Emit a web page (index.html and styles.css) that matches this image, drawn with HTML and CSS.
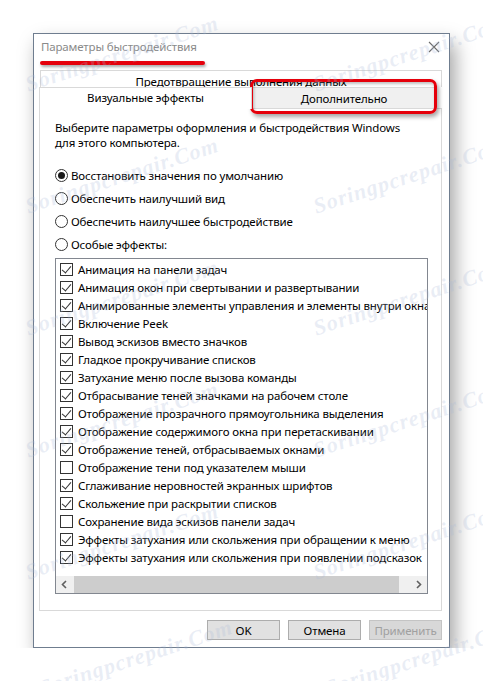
FILE: index.html
```html
<!DOCTYPE html>
<html lang="ru">
<head>
    <meta charset="UTF-8">
    <meta name="viewport" content="width=device-width, initial-scale=1.0">
    <title>Параметры быстродействия</title>
    <link rel="stylesheet" href="styles.css">
</head>
<body>

    <div class="window">
        <div class="titlebar">
            <span class="title">Параметры быстродействия</span>
            <svg class="close" width="12" height="12" viewBox="0 0 12 12">
                <path d="M1 1 L11 11 M11 1 L1 11" stroke="#6b6b6b" stroke-width="1.1" fill="none"/>
            </svg>
        </div>

        <div class="content">
            <div class="tabs">
                <div class="tab-row back">
                    <div class="tab wide">Предотвращение выполнения данных</div>
                </div>
                <div class="tab-row front">
                    <div class="tab active">Визуальные эффекты</div>
                    <div class="tab other">Дополнительно</div>
                </div>
            </div>

            <div class="panel">
                <p class="intro">Выберите параметры оформления и быстродействия Windows<br>для этого компьютера.</p>

                <div class="radios">
                    <label class="radio"><span class="dot on"></span>Восстановить значения по умолчанию</label>
                    <label class="radio"><span class="dot"></span>Обеспечить наилучший вид</label>
                    <label class="radio"><span class="dot"></span>Обеспечить наилучшее быстродействие</label>
                    <label class="radio"><span class="dot"></span>Особые эффекты:</label>
                </div>

                <div class="listbox">
                    <ul class="items">
                        <li><span class="box on"></span>Анимация на панели задач</li>
                        <li><span class="box on"></span>Анимация окон при свертывании и развертывании</li>
                        <li><span class="box on"></span>Анимированные элементы управления и элементы внутри окна</li>
                        <li><span class="box on"></span>Включение Peek</li>
                        <li><span class="box on"></span>Вывод эскизов вместо значков</li>
                        <li><span class="box on"></span>Гладкое прокручивание списков</li>
                        <li><span class="box on"></span>Затухание меню после вызова команды</li>
                        <li><span class="box on"></span>Отбрасывание теней значками на рабочем столе</li>
                        <li><span class="box on"></span>Отображение прозрачного прямоугольника выделения</li>
                        <li><span class="box on"></span>Отображение содержимого окна при перетаскивании</li>
                        <li><span class="box on"></span>Отображение теней, отбрасываемых окнами</li>
                        <li><span class="box"></span>Отображение тени под указателем мыши</li>
                        <li><span class="box on"></span>Сглаживание неровностей экранных шрифтов</li>
                        <li><span class="box on"></span>Скольжение при раскрытии списков</li>
                        <li><span class="box"></span>Сохранение вида эскизов панели задач</li>
                        <li><span class="box on"></span>Эффекты затухания или скольжения при обращении к меню</li>
                        <li><span class="box on"></span>Эффекты затухания или скольжения при появлении подсказок</li>
                    </ul>
                    <div class="hscroll">
                        <svg class="arrow" width="17" height="17" viewBox="0 0 17 17">
                            <path d="M10 5 L6.5 8.5 L10 12" stroke="#606060" stroke-width="1.6" fill="none"/>
                        </svg>
                        <div class="thumb"></div>
                        <svg class="arrow" width="17" height="17" viewBox="0 0 17 17">
                            <path d="M7 5 L10.5 8.5 L7 12" stroke="#606060" stroke-width="1.6" fill="none"/>
                        </svg>
                    </div>
                </div>
            </div>

            <div class="buttons">
                <button class="btn">OK</button>
                <button class="btn">Отмена</button>
                <button class="btn" disabled>Применить</button>
            </div>
        </div>

        <!-- annotations drawn over the screenshot -->
        <div class="mark-line"></div>
        <div class="mark-box"></div>
    </div>

    <div class="watermarks">
        <span class="wm" style="left:26px;top:72px">Soringpcrepair.Com</span>
        <span class="wm" style="left:314px;top:72px">Soringpcrepair.Com</span>
        <span class="wm" style="left:26px;top:194px">Soringpcrepair.Com</span>
        <span class="wm" style="left:314px;top:194px">Soringpcrepair.Com</span>
        <span class="wm" style="left:26px;top:316px">Soringpcrepair.Com</span>
        <span class="wm" style="left:314px;top:316px">Soringpcrepair.Com</span>
        <span class="wm" style="left:26px;top:438px">Soringpcrepair.Com</span>
        <span class="wm" style="left:314px;top:438px">Soringpcrepair.Com</span>
        <span class="wm" style="left:26px;top:560px">Soringpcrepair.Com</span>
        <span class="wm" style="left:314px;top:560px">Soringpcrepair.Com</span>
        <span class="wm" style="left:40px;top:676px">Soringpcrepair.Com</span>
        <span class="wm" style="left:326px;top:676px">Soringpcrepair.Com</span>
    </div>

</body>
</html>
```

FILE: styles.css
```css
body{
    margin: 0;
    padding: 33px 0 0 33px;
    background: #fff;
    font-family: "Noto Sans", "Open Sans", sans-serif;
    font-size: 11.5px;
    letter-spacing: -0.15px;
    color: #000;
}

.window{
    position: relative;
    width: 417px;
    height: 615px;
    box-sizing: border-box;
    border: 1px solid #6f7d8f;
    background: #fff;
    box-shadow: 5px 10px 18px rgba(0, 0, 0, 0.36);
    display: flex;
    flex-direction: column;
}

.titlebar{
    height: 30px;
    padding: 5px 9px 0 7px;
    box-sizing: border-box;
    display: flex;
    justify-content: space-between;
    align-items: flex-start;
}

.title{
    color: #8a8a8a;
    line-height: 16px;
}

.close{
    margin-top: 2px;
}

.content{
    flex: 1;
    padding: 6px 7px 7px 5px;
    display: flex;
    flex-direction: column;
}

/* tabs */
.tab-row{
    display: flex;
}

.tab{
    box-sizing: border-box;
    border: 1px solid #d9d9d9;
    border-bottom: none;
    text-align: center;
    white-space: nowrap;
}

.tab.wide{
    flex: 1;
    height: 17px;
    line-height: 21px;
    margin-left: 1px;
}

.tab.active{
    width: 213px;
    height: 22px;
    line-height: 20px;
    background: #fff;
    position: relative;
    z-index: 1;
    margin-bottom: -1px;
}

.tab.other{
    width: 185px;
    height: 21px;
    line-height: 22px;
    background: #f0f0f0;
    border-left: none;
}

.panel{
    height: 503px;
    box-sizing: border-box;
    border: 1px solid #d9d9d9;
    padding: 11px 13px 0 15px;
    background: #fff;
}

.intro{
    margin: 0;
    line-height: 15px;
}

.radios{
    margin-top: 14px;
}

.radio{
    display: flex;
    align-items: center;
    height: 23px;
    white-space: nowrap;
}

.dot{
    width: 13px;
    height: 13px;
    box-sizing: border-box;
    border: 1px solid #333;
    border-radius: 50%;
    margin-right: 3px;
    display: flex;
    align-items: center;
    justify-content: center;
}

.dot.on::after{
    content: '';
    width: 7px;
    height: 7px;
    border-radius: 50%;
    background: #1a1a1a;
}

/* listbox */
.listbox{
    margin-top: 2px;
    height: 336px;
    box-sizing: border-box;
    border: 1px solid #828790;
    display: flex;
    flex-direction: column;
}

.items{
    flex: 1;
    margin: 0;
    padding: 1px 0 0;
    list-style: none;
    overflow: hidden;
}

.items li{
    height: 18px;
    display: flex;
    align-items: center;
    white-space: nowrap;
    padding-left: 4px;
}

.box{
    flex: none;
    width: 13px;
    height: 13px;
    box-sizing: border-box;
    border: 1px solid #333;
    margin-right: 5px;
    position: relative;
}

.box.on::after{
    content: '';
    position: absolute;
    left: 3px;
    top: 0px;
    width: 4px;
    height: 8px;
    border-right: 1.3px solid #333;
    border-bottom: 1.3px solid #333;
    transform: rotate(40deg);
}

.hscroll{
    height: 17px;
    background: #f0f0f0;
    display: flex;
    align-items: center;
}

.arrow{
    flex: none;
}

.thumb{
    flex: 1;
    height: 17px;
    background: #cdcdcd;
    margin: 0 11px 0 1px;
}

/* bottom buttons */
.buttons{
    margin-top: 9px;
    display: flex;
    justify-content: flex-end;
    gap: 8px;
}

.btn{
    width: 73px;
    height: 20px;
    padding: 0;
    border: 1px solid #adadad;
    background: #e1e1e1;
    font-family: inherit;
    font-size: 11.5px;
    letter-spacing: -0.15px;
    color: #000;
}

.btn:disabled{
    color: #a0a0a0;
    border-color: #c4c4c4;
    background: #d8d8d8;
}

/* red marks */
.mark-line{
    position: absolute;
    left: 6px;
    top: 27px;
    width: 165px;
    height: 4px;
    border-radius: 2px;
    background: #e5000b;
    box-shadow: 1px 2px 3px rgba(0, 0, 0, 0.35);
}

.mark-box{
    position: absolute;
    left: 216px;
    top: 45px;
    width: 187px;
    height: 35px;
    box-sizing: border-box;
    border: 3px solid #e5000b;
    border-radius: 7px;
    box-shadow: 2px 3px 4px rgba(0, 0, 0, 0.35), inset 1px 2px 3px rgba(0, 0, 0, 0.25);
}

/* site watermark */
.watermarks{
    position: absolute;
    left: 0;
    top: 0;
    width: 483px;
    height: 681px;
    overflow: hidden;
    pointer-events: none;
}

.wm{
    position: absolute;
    font-family: "Liberation Serif", serif;
    font-style: italic;
    font-weight: bold;
    font-size: 22px;
    letter-spacing: 1px;
    color: rgba(170, 185, 215, 0.25);
    white-space: nowrap;
    transform: rotate(-18deg);
    transform-origin: left center;
}
```
